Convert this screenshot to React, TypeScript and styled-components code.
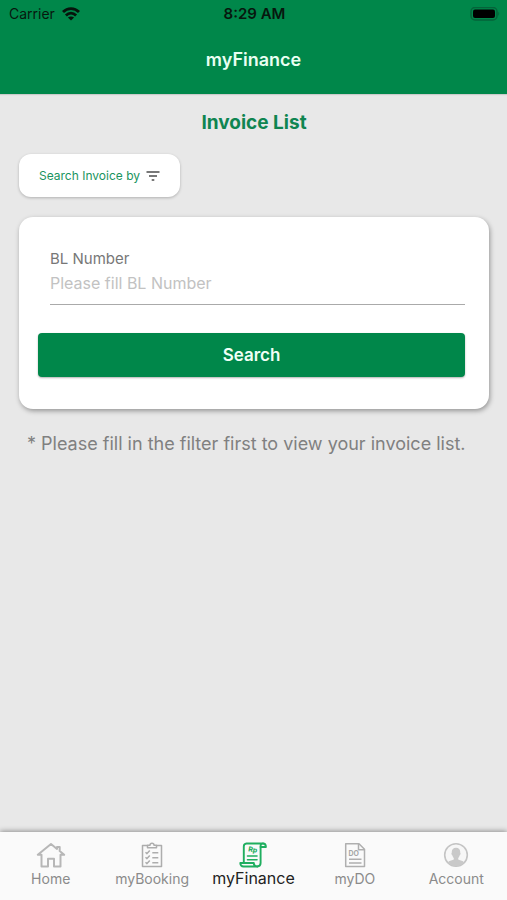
import React from "react";
import styled, { createGlobalStyle } from "styled-components";

const GREEN = "#00874a";

const GlobalStyle = createGlobalStyle`
  *, *::before, *::after { box-sizing: border-box; }
  body {
    margin: 0;
    background: #e8e8e8;
    font-family: Inter, "Liberation Sans", sans-serif;
  }
  button, input { font-family: inherit; }
`;

const Screen = styled.div`
  display: flex;
  flex-direction: column;
  min-height: 100vh;
`;

const Header = styled.header`
  background: ${GREEN};
  padding-bottom: 20px;
  box-shadow: 0 1px 1px rgba(0, 0, 0, 0.12);
`;

const StatusBar = styled.div`
  display: grid;
  grid-template-columns: 1fr auto 1fr;
  align-items: center;
  height: 28px;
  padding: 0 7px 0 9px;
  color: #07170e;
  font-size: 14px;
  line-height: 20px;
`;

const Carrier = styled.span`
  display: flex;
  align-items: center;
  gap: 7px;
`;

const Clock = styled.time`
  font-size: 15px;
  font-weight: 600;
`;

const Battery = styled.svg`
  justify-self: end;
`;

const AppTitle = styled.h1`
  margin: 18px 0 0;
  color: #e9fff2;
  font-size: 18px;
  font-weight: 600;
  line-height: 28px;
  text-align: center;
`;

const Content = styled.main`
  flex: 1;
  display: flex;
  flex-direction: column;
  align-items: flex-start;
  padding: 16px 18px 16px 19px;
`;

const PageTitle = styled.h2`
  align-self: stretch;
  margin: 0 0 18px;
  color: #0f8551;
  font-size: 19px;
  font-weight: 700;
  line-height: 26px;
  text-align: center;
`;

const FilterButton = styled.button`
  display: flex;
  align-items: center;
  gap: 6px;
  height: 43px;
  margin-bottom: 20px;
  padding: 0 20px;
  border: 0;
  border-radius: 12px;
  background: #fff;
  box-shadow: 0 1px 3px rgba(0, 0, 0, 0.24);
  color: #1a9460;
  font-size: 12px;
  line-height: 16px;
`;

const Card = styled.form`
  align-self: stretch;
  padding: 32px 24px 32px 19px;
  border-radius: 14px;
  background: #fff;
  box-shadow: 1px 2px 5px rgba(0, 0, 0, 0.36);
`;

const Field = styled.div`
  display: flex;
  flex-direction: column;
  margin: 0 0 28px 12px;
`;

const Label = styled.label`
  color: #777;
  font-size: 15px;
  line-height: 20px;
`;

const TextInput = styled.input`
  width: 100%;
  height: 36px;
  padding: 0 0 8px;
  border: 0;
  border-bottom: 1px solid #aaa;
  border-radius: 0;
  outline: 0;
  background: transparent;
  color: #333;
  font-size: 16px;

  &::placeholder {
    color: #c2c2c2;
    opacity: 1;
  }
`;

const SearchButton = styled.button`
  width: 100%;
  height: 44px;
  border: 0;
  border-radius: 4px;
  background: ${GREEN};
  box-shadow: 0 1px 2px rgba(0, 0, 0, 0.3);
  color: #f0fff6;
  font-size: 17px;
  font-weight: 600;
`;

const Hint = styled.p`
  margin: 22px 0 0 8px;
  color: #808080;
  font-size: 18px;
  line-height: 26px;
`;

const TabBar = styled.nav`
  position: sticky;
  bottom: 0;
  display: grid;
  grid-template-columns: repeat(5, 1fr);
  height: 68px;
  background: #fafafa;
  box-shadow: 0 -1px 5px rgba(0, 0, 0, 0.38);
`;

const Tab = styled.a<{ $active?: boolean }>`
  display: flex;
  flex-direction: column;
  align-items: center;
  gap: ${(p) => (p.$active ? 0 : 1)}px;
  padding-top: 10px;
  color: ${(p) => (p.$active ? "#222" : "#8b8b8b")};
  font-size: ${(p) => (p.$active ? 16 : 14)}px;
  line-height: 20px;
  text-decoration: none;
`;

const WifiIcon = () => (
  <svg width="18" height="14" viewBox="0 0 18 14" aria-hidden="true">
    <g fill="none" stroke="#06140c" strokeWidth="2.8">
      <path d="M1 5.100C5.500.500 12.500.500 17 5.100" />
      <path d="M3.900 8.400c3-2.900 7.200-2.900 10.200 0" />
    </g>
    <path d="M9 13.600 5.900 10.600c1.700-1.600 4.500-1.600 6.200 0z" fill="#06140c" />
  </svg>
);

const BatteryIcon = () => (
  <Battery width="30" height="14" viewBox="0 0 30 14" role="img" aria-label="Battery full">
    <rect x="1" y="0.500" width="26" height="12.500" rx="4" fill="none" stroke="#05633a" strokeWidth="1.500" />
    <rect x="3" y="2.500" width="22" height="8.500" rx="2" fill="#000" />
    <path d="M28.300 4.800c1.200.5 1.200 3.500 0 4z" fill="#05633a" />
  </Battery>
);

const FilterIcon = () => (
  <svg width="14" height="12" viewBox="0 0 14 12" fill="none" stroke="#4c4c4c" strokeWidth="1.600" aria-hidden="true">
    <path d="M.5 2h13M3 6h8M5.700 10h2.600" />
  </svg>
);

const HomeIcon = () => (
  <svg width="30" height="26" viewBox="0 0 30 26" fill="none" stroke="#b7b7b7" strokeWidth="2" strokeLinejoin="round" strokeLinecap="round" aria-hidden="true">
    <path d="M5.500 12.800H1.800L15 2l6 4.900V5h2.700v4.100l4.500 3.700h-3.700v11.700H18v-7.700h-6v7.700H5.500z" />
  </svg>
);

const BookingIcon = () => (
  <svg width="24" height="26" viewBox="0 0 24 26" fill="none" stroke="#adadad" strokeWidth="1.500" strokeLinejoin="round" aria-hidden="true">
    <path d="M7.500 3.500H2.500v21h19v-21h-5" />
    <path d="M7.500 5.700V3.200H10a2 2 0 0 1 4 0h2.500v2.500z" />
    <path d="m5.500 10.300 1.500 1.300 2.800-3M5.500 15.300 7 16.600l2.800-3M5.500 20.300 7 21.600l2.800-3M12.300 10.800h6M12.300 15.800h6M12.300 20.800h6" />
  </svg>
);

const FinanceIcon = () => (
  <svg width="28" height="26" viewBox="0 0 28 26" fill="none" stroke="#1fae5f" strokeWidth="1.900" strokeLinejoin="round" strokeLinecap="round" aria-hidden="true">
    <path d="M24 1.500H7.500A3 3 0 0 0 4.800 4.500V21M24 1.500a2.400 2.400 0 0 0-2.400 2.400V21a3.500 3.500 0 0 1-3.300 3.500" />
    <path d="M24 1.500c1.800 0 2.900 1.200 2.900 3.500h-5.300" />
    <path d="M18.300 24.500H4.500c-2 0-3.200-1.200-3.200-3.500h13.500c.1 2.300 1.300 3.500 3.500 3.500z" />
    <path d="M8.500 14h9.500M8.500 17.800h9.500" strokeWidth="1.600" />
    <text x="9" y="9.500" transform="rotate(10 10 9)" fill="#1fae5f" stroke="none" fontSize="7" fontWeight="800">Rp</text>
  </svg>
);

const DocumentIcon = () => (
  <svg width="24" height="26" viewBox="0 0 24 26" fill="none" stroke="#afafaf" strokeWidth="1.500" strokeLinejoin="round" aria-hidden="true">
    <path d="M16 1.700H2.700v22.800h18.800V7.200z" />
    <path d="M15.500 2v5.700h5.700" />
    <path d="M6 17.300h12.500M6 21h12.500" />
    <text x="5.500" y="14" fill="#a6a6a6" stroke="none" fontSize="7" fontWeight="700">DO</text>
  </svg>
);

const AccountIcon = () => (
  <svg width="26" height="26" viewBox="0 0 26 26" aria-hidden="true">
    <circle cx="13" cy="13" r="11.300" fill="#f7f7f7" stroke="#c4c4c4" strokeWidth="1.600" />
    <path d="M13 5.700c-3 0-4.500 2-4.200 5-.7.300-.3 2 .5 2.500.3 1.300.8 2 1.500 2.800v1.600c-2.500 1-4.800 1.200-6 2.800a11 11 0 0 0 16.400 0c-1.200-1.600-3.500-1.800-6-2.800V16c.7-.8 1.200-1.500 1.500-2.800.8-.5 1.200-2.200.5-2.500.3-3-1.200-5-4.200-5z" fill="#c9c9c9" />
  </svg>
);

const tabs = [
  { label: "Home", Icon: HomeIcon },
  { label: "myBooking", Icon: BookingIcon },
  { label: "myFinance", Icon: FinanceIcon, active: true },
  { label: "myDO", Icon: DocumentIcon },
  { label: "Account", Icon: AccountIcon },
];

export default function App() {
  return (
    <>
      <GlobalStyle />
      <Screen>
        <Header>
          <StatusBar>
            <Carrier>
              Carrier
              <WifiIcon />
            </Carrier>
            <Clock>8:29 AM</Clock>
            <BatteryIcon />
          </StatusBar>
          <AppTitle>myFinance</AppTitle>
        </Header>
        <Content>
          <PageTitle>Invoice List</PageTitle>
          <FilterButton type="button">
            Search Invoice by
            <FilterIcon />
          </FilterButton>
          <Card onSubmit={(e: React.FormEvent) => e.preventDefault()}>
            <Field>
              <Label htmlFor="bl-number">BL Number</Label>
              <TextInput id="bl-number" type="text" placeholder="Please fill BL Number" />
            </Field>
            <SearchButton type="submit">Search</SearchButton>
          </Card>
          <Hint>* Please fill in the filter first to view your invoice list.</Hint>
        </Content>
        <TabBar>
          {tabs.map(({ label, Icon, active }) => (
            <Tab key={label} href={`#${label}`} $active={active} aria-current={active ? "page" : undefined}>
              <Icon />
              {label}
            </Tab>
          ))}
        </TabBar>
      </Screen>
    </>
  );
}
